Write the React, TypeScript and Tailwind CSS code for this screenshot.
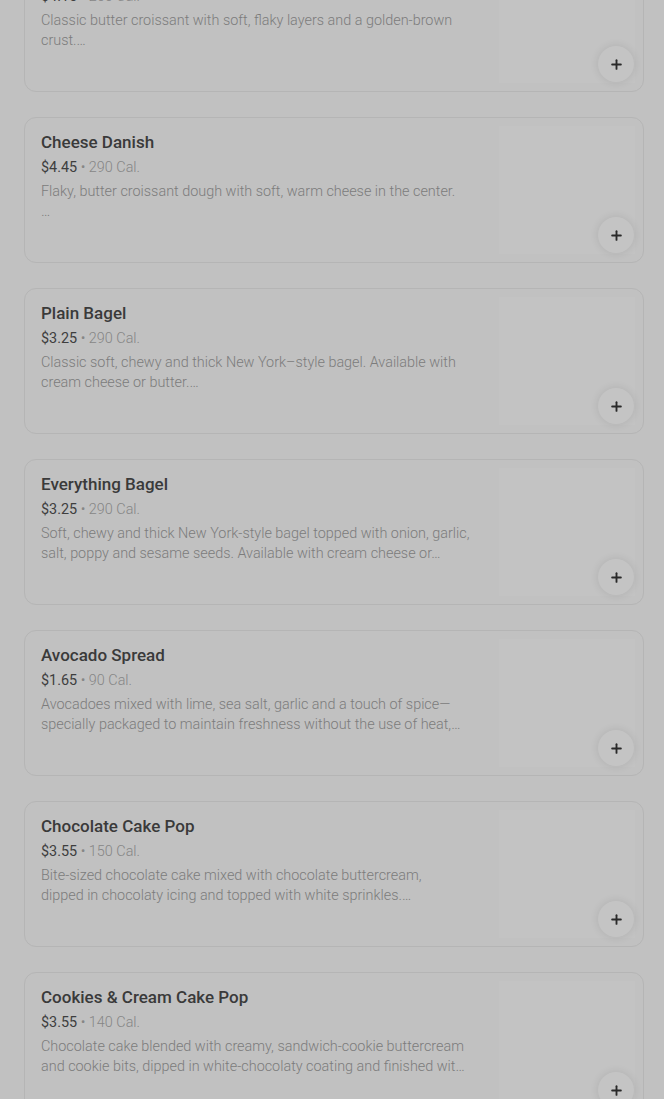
import { Plus } from "lucide-react";

type Item = {
  name: string;
  price: string;
  cal: string;
  lines: string[];
};

const items: Item[] = [
  {
    name: "Butter Croissant",
    price: "$4.15",
    cal: "260 Cal.",
    lines: ["Classic butter croissant with soft, flaky layers and a golden-brown", "crust.…"],
  },
  {
    name: "Cheese Danish",
    price: "$4.45",
    cal: "290 Cal.",
    lines: ["Flaky, butter croissant dough with soft, warm cheese in the center.", "…"],
  },
  {
    name: "Plain Bagel",
    price: "$3.25",
    cal: "290 Cal.",
    lines: ["Classic soft, chewy and thick New York–style bagel. Available with", "cream cheese or butter.…"],
  },
  {
    name: "Everything Bagel",
    price: "$3.25",
    cal: "290 Cal.",
    lines: [
      "Soft, chewy and thick New York-style bagel topped with onion, garlic,",
      "salt, poppy and sesame seeds. Available with cream cheese or…",
    ],
  },
  {
    name: "Avocado Spread",
    price: "$1.65",
    cal: "90 Cal.",
    lines: [
      "Avocadoes mixed with lime, sea salt, garlic and a touch of spice—",
      "specially packaged to maintain freshness without the use of heat,…",
    ],
  },
  {
    name: "Chocolate Cake Pop",
    price: "$3.55",
    cal: "150 Cal.",
    lines: [
      "Bite-sized chocolate cake mixed with chocolate buttercream,",
      "dipped in chocolaty icing and topped with white sprinkles.…",
    ],
  },
  {
    name: "Cookies & Cream Cake Pop",
    price: "$3.55",
    cal: "140 Cal.",
    lines: [
      "Chocolate cake blended with creamy, sandwich-cookie buttercream",
      "and cookie bits, dipped in white-chocolaty coating and finished wit…",
    ],
  },
];

function MenuCard({ item }: { item: Item }) {
  return (
    <div className="relative flex h-[146px] rounded-xl border border-[#b5b5b5] bg-[#c1c1c1]">
      <div className="flex-1 pl-4 pr-4 pt-[12px]">
        <div className="text-[17px] font-medium leading-6 text-[#3a3a3a]">{item.name}</div>
        <div className="mt-[4px] text-[14.4px] font-light leading-5 text-[#868686]">
          <span className="font-normal text-[#3e3e3e]">{item.price}</span> • {item.cal}
        </div>
        <div className="mt-1 text-[14.4px] font-light leading-5 text-[#7c7c7c]">
          {item.lines.map((l, i) => (
            <div key={i} className="whitespace-nowrap">
              {l}
            </div>
          ))}
        </div>
      </div>
      <div className="my-2 mr-2 w-[136px] bg-[#c3c3c3]" />
      <button className="absolute bottom-[9px] right-[9px] flex h-9 w-9 items-center justify-center rounded-full bg-[#c4c4c4] shadow-[0_0_8px_rgba(0,0,0,0.1)]">
        <Plus className="h-[15px] w-[15px] text-[#2a2a2a]" strokeWidth={3} />
      </button>
    </div>
  );
}

export default function App() {
  return (
    <div
      className="min-h-[1099px] overflow-hidden bg-[#c1c1c1]"
      style={{ fontFamily: "Roboto, 'Liberation Sans', sans-serif" }}
    >
      <div className="-mt-[54px] ml-6 mr-5 flex flex-col gap-[25px]">
        {items.map((it) => (
          <MenuCard key={it.name} item={it} />
        ))}
      </div>
    </div>
  );
}
